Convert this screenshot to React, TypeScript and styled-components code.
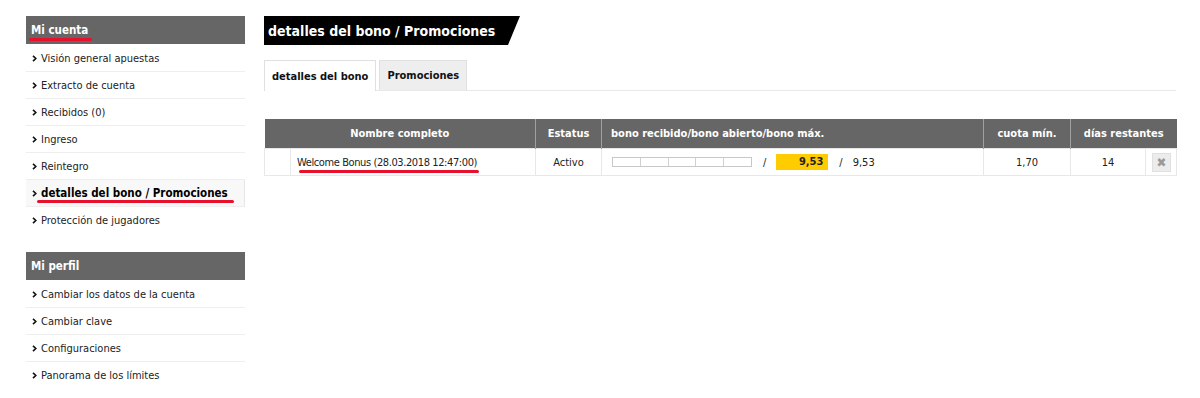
import React, { FC } from 'react'
import styled, { createGlobalStyle } from 'styled-components'

const GlobalStyle = createGlobalStyle`
  html, body {
    margin: 0;
    padding: 0;
    background: #fff;
  }
  body {
    font-family: 'DejaVu Sans Condensed', 'DejaVu Sans', 'Liberation Sans', sans-serif;
    font-stretch: condensed;
    font-size: 11px;
    color: #222;
  }
`

const accountLinks = [
    'Visión general apuestas',
    'Extracto de cuenta',
    'Recibidos (0)',
    'Ingreso',
    'Reintegro',
    'detalles del bono / Promociones',
    'Protección de jugadores',
]
const ACTIVE = 'detalles del bono / Promociones'

const profileLinks = [
    'Cambiar los datos de la cuenta',
    'Cambiar clave',
    'Configuraciones',
    'Panorama de los límites',
]

const Chevron: FC = () => (
    <svg width='5' height='7' viewBox='0 0 5 7'>
        <path d='M1 0.8 L3.8 3.5 L1 6.2' stroke='#111' strokeWidth='1.6' fill='none' />
    </svg>
)

const Marked: FC<{ children: React.ReactNode; left?: number; right?: number; offset?: number }> = ({
    children,
    left = 0,
    right = 0,
    offset = 3,
}) => (
    <MarkWrap>
        {children}
        <MarkLine style={{ left: -left, right: -right, bottom: -offset }} />
    </MarkWrap>
)

const App: FC = () => {
    return (
        <Page>
            <GlobalStyle />
            <Sidebar>
                <Section>
                    <SectionTitle>
                        <Marked left={2} right={4} offset={4}>Mi cuenta</Marked>
                    </SectionTitle>
                    {accountLinks.map((l) => (
                        <NavItem key={l} $active={l === ACTIVE}>
                            <Chevron />
                            {l === ACTIVE ? <Marked left={4} right={6} offset={3}>{l}</Marked> : <span>{l}</span>}
                        </NavItem>
                    ))}
                </Section>
                <Section>
                    <SectionTitle>Mi perfil</SectionTitle>
                    {profileLinks.map((l) => (
                        <NavItem key={l}>
                            <Chevron />
                            <span>{l}</span>
                        </NavItem>
                    ))}
                </Section>
            </Sidebar>

            <Main>
                <TitleBar>detalles del bono / Promociones</TitleBar>
                <Tabs>
                    <Tab $active>detalles del bono</Tab>
                    <Tab>Promociones</Tab>
                </Tabs>

                <Table>
                    <colgroup>
                        <col style={{ width: 26 }} />
                        <col style={{ width: 245 }} />
                        <col style={{ width: 66 }} />
                        <col style={{ width: 382 }} />
                        <col style={{ width: 87 }} />
                        <col style={{ width: 75 }} />
                        <col style={{ width: 31 }} />
                    </colgroup>
                    <thead>
                        <tr>
                            <Th colSpan={2}>Nombre completo</Th>
                            <Th>Estatus</Th>
                            <Th $align='left'>bono recibido/bono abierto/bono máx.</Th>
                            <Th>cuota mín.</Th>
                            <Th colSpan={2}>días restantes</Th>
                        </tr>
                    </thead>
                    <tbody>
                        <tr>
                            <Td />
                            <Td $align='left'>
                                <BonusName>
                                    <Marked left={-2} right={2} offset={4}>Welcome Bonus (28.03.2018 12:47:00)</Marked>
                                </BonusName>
                            </Td>
                            <Td>Activo</Td>
                            <Td $align='left'>
                                <BonusCell>
                                    <Progress>
                                        {[0, 1, 2, 3, 4].map((i) => (
                                            <Segment key={i} />
                                        ))}
                                    </Progress>
                                    <Slash>/</Slash>
                                    <Amount>9,53</Amount>
                                    <Slash>/</Slash>
                                    <span>9,53</span>
                                </BonusCell>
                            </Td>
                            <Td>1,70</Td>
                            <Td>14</Td>
                            <Td>
                                <CloseButton>✖</CloseButton>
                            </Td>
                        </tr>
                    </tbody>
                </Table>
            </Main>
        </Page>
    )
}

export default App

const Page = styled.div`
    display: flex;
    align-items: flex-start;
    gap: 19px;
    padding: 16px 0 16px 26px;
`

const Sidebar = styled.div`
    width: 219px;
    flex-shrink: 0;
    display: flex;
    flex-direction: column;
    gap: 19px;
`

const Section = styled.div`
    display: flex;
    flex-direction: column;
`

const SectionTitle = styled.div`
    height: 28px;
    background: #666;
    color: #fff;
    font-weight: bold;
    font-size: 11.5px;
    display: flex;
    align-items: center;
    padding-left: 5px;
    border-bottom: 1px solid #fff;
`

const NavItem = styled.div<{ $active?: boolean }>`
    height: 26px;
    display: flex;
    align-items: center;
    gap: 4px;
    padding-left: 6px;
    white-space: nowrap;
    border-bottom: 1px solid #eee;
    font-size: ${(p) => (p.$active ? '11.5px' : '11px')};
    font-weight: ${(p) => (p.$active ? 'bold' : 'normal')};
    color: ${(p) => (p.$active ? '#000' : '#222')};
    background: ${(p) => (p.$active ? '#f8f8f8' : '#fff')};
    border-right: ${(p) => (p.$active ? '1px solid #e6e6e6' : 'none')};
    &:last-child {
        border-bottom: none;
    }
`

const MarkWrap = styled.span`
    position: relative;
    display: inline-block;
`

const MarkLine = styled.span`
    position: absolute;
    height: 3px;
    border-radius: 2px;
    background: #e8112d;
`

const Main = styled.div`
    width: 912px;
    flex-shrink: 0;
    display: flex;
    flex-direction: column;
`

const TitleBar = styled.div`
    width: 256px;
    height: 29px;
    background: #000;
    color: #fff;
    font-weight: bold;
    font-size: 14px;
    display: flex;
    align-items: center;
    padding-left: 4px;
    box-sizing: border-box;
    clip-path: polygon(0 0, 100% 0, calc(100% - 12px) 100%, 0 100%);
`

const Tabs = styled.div`
    margin-top: 15px;
    display: flex;
    gap: 3px;
    align-items: flex-end;
    border-bottom: 1px solid #e8e8e8;
`

const Tab = styled.div<{ $active?: boolean }>`
    padding: 0 7px;
    display: flex;
    align-items: center;
    font-weight: bold;
    font-size: 11px;
    color: #111;
    border: 1px solid #e0e0e0;
    border-bottom: none;
    background: ${(p) => (p.$active ? '#fff' : '#eee')};
    margin-bottom: ${(p) => (p.$active ? '-1px' : '0')};
    height: ${(p) => (p.$active ? '30px' : '29px')};
`

const Table = styled.table`
    margin-top: 28px;
    width: 912px;
    table-layout: fixed;
    border-collapse: collapse;
`

const Th = styled.th<{ $align?: string }>`
    height: 29px;
    padding: 0 9px;
    background: #666;
    color: #fff;
    font-weight: bold;
    font-size: 11px;
    text-align: ${(p) => p.$align || 'center'};
    border-left: 1px solid #a0a0a0;
    white-space: nowrap;
    &:first-child {
        border-left: none;
    }
`

const Td = styled.td<{ $align?: string }>`
    height: 26px;
    padding: 0 6px;
    font-size: 11px;
    color: #222;
    text-align: ${(p) => p.$align || 'center'};
    border: 1px solid #e8e8e8;
    white-space: nowrap;
`

const BonusName = styled.span`
    letter-spacing: -0.4px;
`

const BonusCell = styled.div`
    display: flex;
    align-items: center;
    padding-left: 4px;
`

const Progress = styled.div`
    display: flex;
    width: 140px;
    height: 10px;
    border: 1px solid #c8c8c8;
    box-sizing: border-box;
`

const Segment = styled.div`
    flex: 1;
    border-left: 1px solid #d0d0d0;
    &:first-child {
        border-left: none;
    }
`

const Slash = styled.span`
    margin: 0 10px 0 11px;
`

const Amount = styled.span`
    width: 52px;
    height: 16px;
    box-sizing: border-box;
    background: #ffcc00;
    font-weight: bold;
    text-align: right;
    padding-right: 5px;
    line-height: 16px;
`

const CloseButton = styled.span`
    display: inline-flex;
    align-items: center;
    justify-content: center;
    width: 17px;
    height: 17px;
    background: #ececec;
    border: 1px solid #e0e0e0;
    color: #9a9a9a;
    font-size: 13px;
    font-weight: bold;
`
